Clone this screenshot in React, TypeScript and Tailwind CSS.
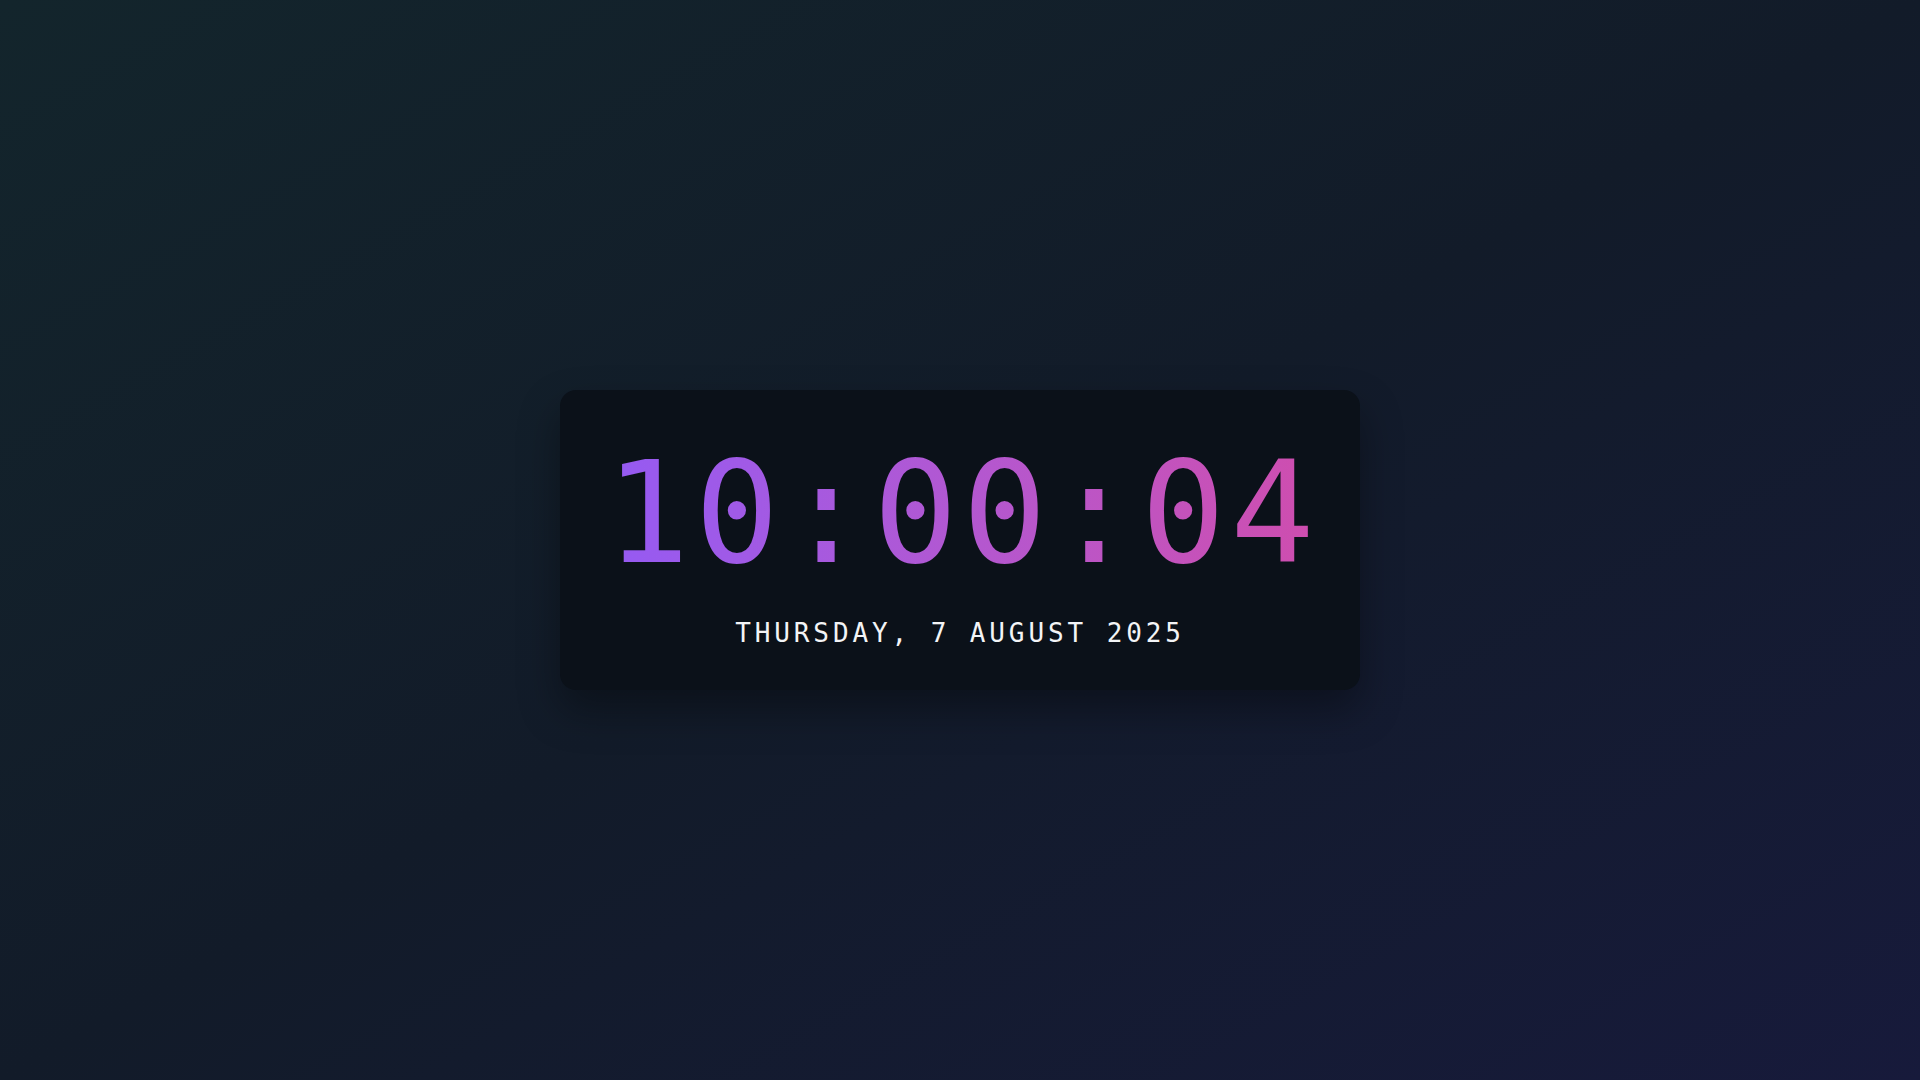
export default function App() {
  return (
    <div className="flex min-h-screen w-full items-center justify-center bg-gradient-to-br from-[#13252c] via-[#121b29] to-[#171a3b]">
      <div className="flex h-[300px] w-[800px] flex-col items-center justify-center rounded-2xl bg-[#0b1119] shadow-[0_20px_40px_rgba(0,0,0,0.35)]">
        <div
          className="mt-[16px] mr-[-5px] bg-gradient-to-r from-[#955af3] to-[#cf4dae] bg-clip-text text-[140px] leading-none tracking-[5px] text-transparent"
          style={{ fontFamily: 'Consolas, "DejaVu Sans Mono", monospace' }}
        >
          10:00:04
        </div>
        <div
          className="mt-[30px] text-[26px] tracking-[0.15em] text-gray-100"
          style={{ fontFamily: 'Consolas, "DejaVu Sans Mono", monospace' }}
        >
          THURSDAY, 7 AUGUST 2025
        </div>
      </div>
    </div>
  );
}
